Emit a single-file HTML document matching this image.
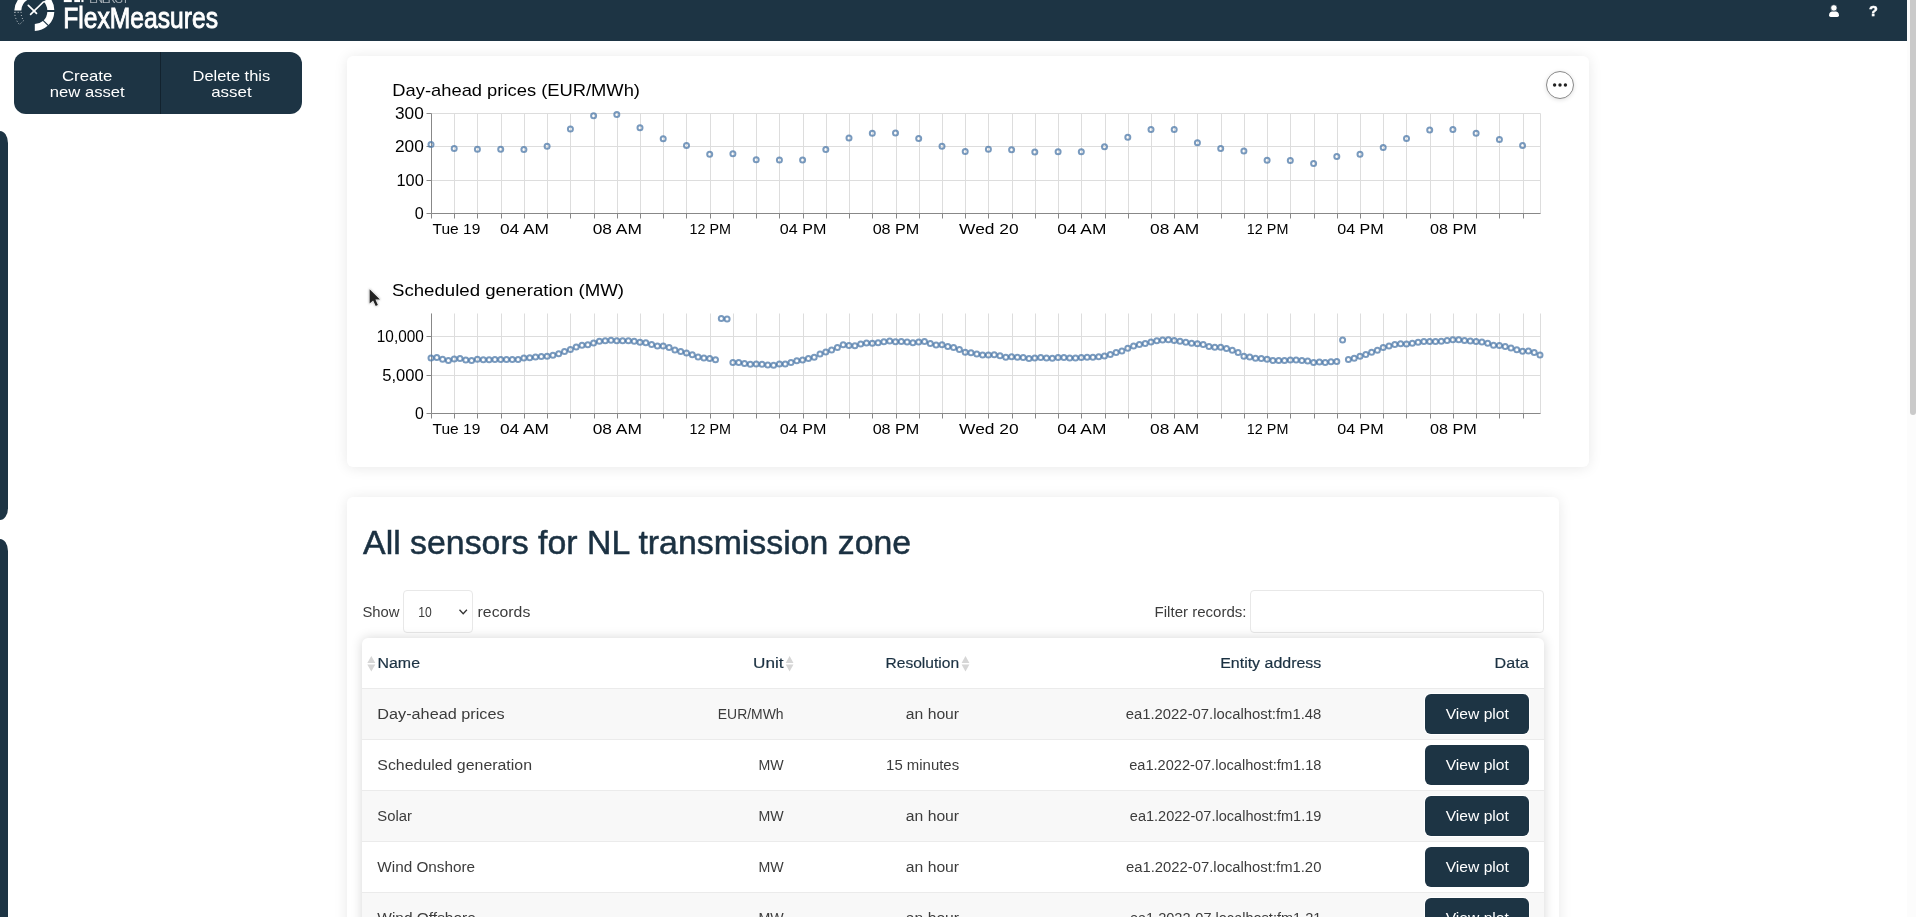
<!DOCTYPE html>
<html><head><meta charset="utf-8">
<style>
*{box-sizing:border-box;margin:0;padding:0}
html,body{width:1916px;height:917px;overflow:hidden;background:#fff;font-family:"Liberation Sans",sans-serif}
.abs{position:absolute}
#hdr{left:0;top:0;width:1907px;height:41px;background:#1d3444}
#sb{left:1907px;top:0;width:9px;height:917px;background:#fcfcfc}
#thumb{left:1910px;top:0;width:6px;height:415px;background:#cacaca;border-radius:0 0 3px 3px}
#btngrp{left:14px;top:52px;width:288px;height:62px;background:#1d3444;border-radius:12px;overflow:hidden}
#btngrp .div{position:absolute;left:146px;top:0;width:1px;height:62px;background:#12222e}
.tab{left:0;width:8px;background:#1d3444;border-radius:0 8px 8px 0 / 0 12px 12px 0}
.card{background:#fff;border-radius:6px;box-shadow:0 1px 14px rgba(0,0,0,0.095)}
.inp{background:#fff;border:1px solid #e8e8e8;border-radius:4px}
#tbl{left:362px;top:637.8px;width:1182px;height:300px;background:#fff;border-radius:6px;box-shadow:0 0 12px rgba(0,0,0,0.16);overflow:hidden}
.vbtn{left:1425px;width:104px;height:40px;background:#1d3444;border-radius:6px;box-shadow:0 0 0 1px #fff}
#menu{left:1546px;top:71px;width:28px;height:28px;border-radius:50%;border:1px solid #8a8a8a;background:#fff;box-shadow:0 1px 4px rgba(0,0,0,0.12)}
svg{position:absolute;left:0;top:0;will-change:transform}
text{font-family:"Liberation Sans",sans-serif}
</style></head>
<body>
<div id="hdr" class="abs"></div>
<div id="sb" class="abs"></div>
<div id="thumb" class="abs"></div>
<div id="btngrp" class="abs"><div class="div"></div></div>
<div class="abs tab" style="top:131px;height:389px"></div>
<div class="abs tab" style="top:539px;height:390px"></div>
<div class="abs card" style="left:347px;top:56px;width:1242px;height:411px"></div>
<div class="abs card" style="left:347px;top:497px;width:1212px;height:440px"></div>
<div id="menu" class="abs"></div>
<div class="abs inp" style="left:403.4px;top:590.4px;width:69.4px;height:42.4px"></div>
<div class="abs inp" style="left:1250.4px;top:590.2px;width:293.6px;height:42.8px"></div>
<div id="tbl" class="abs"></div>
<div class="abs" style="left:362px;top:688px;width:1182px;height:51px;background:#f8f8f8;border-top:1px solid #ebebeb"></div><div class="abs vbtn" style="top:693.9px"></div><div class="abs" style="left:362px;top:739px;width:1182px;height:51px;background:#fff;border-top:1px solid #ebebeb"></div><div class="abs vbtn" style="top:744.9px"></div><div class="abs" style="left:362px;top:790px;width:1182px;height:51px;background:#f8f8f8;border-top:1px solid #ebebeb"></div><div class="abs vbtn" style="top:795.9px"></div><div class="abs" style="left:362px;top:841px;width:1182px;height:51px;background:#fff;border-top:1px solid #ebebeb"></div><div class="abs vbtn" style="top:846.9px"></div><div class="abs" style="left:362px;top:892px;width:1182px;height:51px;background:#f8f8f8;border-top:1px solid #ebebeb"></div><div class="abs vbtn" style="top:897.9px"></div>
<svg width="1916" height="917" viewBox="0 0 1916 917">
<g fill="#222"><circle cx="1554.6" cy="85" r="1.7"/><circle cx="1560" cy="85" r="1.7"/><circle cx="1565.4" cy="85" r="1.7"/></g>
<path d="M459.5 609.8 L463.2 613.8 L466.9 609.8" fill="none" stroke="#333" stroke-width="1.3"/>
<g fill="#d6d6d6">
<path d="M367.3 663 L371.3 656 L375.3 663Z M367.3 664.5 L371.3 671.5 L375.3 664.5Z"/>
<path d="M785.7 663 L789.6 656 L793.5 663Z M785.7 664.5 L789.6 671.5 L793.5 664.5Z"/>
<path d="M961.6 663 L965.5 656 L969.4 663Z M961.6 664.5 L965.5 671.5 L969.4 664.5Z"/>
</g>
<g fill="#fff">
<path d="M1829 15.3 Q1829 11.2 1834 11.2 Q1839 11.2 1839 15.3 Q1839 17.1 1837.3 17.1 L1830.7 17.1 Q1829 17.1 1829 15.3Z"/>
<circle cx="1833.9" cy="7.9" r="3.2" stroke="#1d3243" stroke-width="0.7"/>
</g>
<g fill="#fff"><path d="M14.3 10.4 A20 20 0 0 1 17.8 0 L27.2 0 A13 13 0 0 0 21.3 10.4Z"/><path d="M46 0 L51.5 0 A20 20 0 0 1 54.3 10.1 L47.3 10.1 A13 13 0 0 0 43.5 1.5Z"/><path d="M54.3 11.9 A20 20 0 0 1 48.6 25 L43.7 20.3 A13 13 0 0 0 47.3 11.9Z"/><path d="M47.7 25.8 A20 20 0 0 1 34.8 31 L34.8 24 A13 13 0 0 0 42.9 21Z"/></g><g stroke="#fff" stroke-width="1.7" stroke-linecap="round" fill="none"><path d="M28.3 5.4 L36.5 13.4"/><path d="M30.6 14.4 L43.3 2"/></g><path d="M14.6 12.3 L21.2 12.3 A13 13 0 0 0 23.6 20.6 L19.5 24.6 A20 20 0 0 1 14.6 12.3Z" stroke="#fff" stroke-width="0.9" stroke-dasharray="0.9 2.2" fill="none"/><g fill="#fff"><rect x="63.8" y="0" width="8" height="2.1"/><rect x="74.3" y="0" width="5.7" height="2.1"/><rect x="81.4" y="0" width="2.1" height="2.1"/></g><text x="89.3" y="2.8" font-size="11" fill="#a9b1b8" textLength="39.7" lengthAdjust="spacing">ENERGY</text>
<g stroke="#ddd" stroke-width="1"><line x1="431.5" y1="113.5" x2="431.5" y2="213.5"/><line x1="454.5" y1="113.5" x2="454.5" y2="213.5"/><line x1="477.5" y1="113.5" x2="477.5" y2="213.5"/><line x1="501.5" y1="113.5" x2="501.5" y2="213.5"/><line x1="524.5" y1="113.5" x2="524.5" y2="213.5"/><line x1="547.5" y1="113.5" x2="547.5" y2="213.5"/><line x1="570.5" y1="113.5" x2="570.5" y2="213.5"/><line x1="594.5" y1="113.5" x2="594.5" y2="213.5"/><line x1="617.5" y1="113.5" x2="617.5" y2="213.5"/><line x1="640.5" y1="113.5" x2="640.5" y2="213.5"/><line x1="663.5" y1="113.5" x2="663.5" y2="213.5"/><line x1="686.5" y1="113.5" x2="686.5" y2="213.5"/><line x1="710.5" y1="113.5" x2="710.5" y2="213.5"/><line x1="733.5" y1="113.5" x2="733.5" y2="213.5"/><line x1="756.5" y1="113.5" x2="756.5" y2="213.5"/><line x1="779.5" y1="113.5" x2="779.5" y2="213.5"/><line x1="803.5" y1="113.5" x2="803.5" y2="213.5"/><line x1="826.5" y1="113.5" x2="826.5" y2="213.5"/><line x1="849.5" y1="113.5" x2="849.5" y2="213.5"/><line x1="872.5" y1="113.5" x2="872.5" y2="213.5"/><line x1="896.5" y1="113.5" x2="896.5" y2="213.5"/><line x1="919.5" y1="113.5" x2="919.5" y2="213.5"/><line x1="942.5" y1="113.5" x2="942.5" y2="213.5"/><line x1="965.5" y1="113.5" x2="965.5" y2="213.5"/><line x1="988.5" y1="113.5" x2="988.5" y2="213.5"/><line x1="1012.5" y1="113.5" x2="1012.5" y2="213.5"/><line x1="1035.5" y1="113.5" x2="1035.5" y2="213.5"/><line x1="1058.5" y1="113.5" x2="1058.5" y2="213.5"/><line x1="1081.5" y1="113.5" x2="1081.5" y2="213.5"/><line x1="1105.5" y1="113.5" x2="1105.5" y2="213.5"/><line x1="1128.5" y1="113.5" x2="1128.5" y2="213.5"/><line x1="1151.5" y1="113.5" x2="1151.5" y2="213.5"/><line x1="1174.5" y1="113.5" x2="1174.5" y2="213.5"/><line x1="1197.5" y1="113.5" x2="1197.5" y2="213.5"/><line x1="1221.5" y1="113.5" x2="1221.5" y2="213.5"/><line x1="1244.5" y1="113.5" x2="1244.5" y2="213.5"/><line x1="1267.5" y1="113.5" x2="1267.5" y2="213.5"/><line x1="1290.5" y1="113.5" x2="1290.5" y2="213.5"/><line x1="1314.5" y1="113.5" x2="1314.5" y2="213.5"/><line x1="1337.5" y1="113.5" x2="1337.5" y2="213.5"/><line x1="1360.5" y1="113.5" x2="1360.5" y2="213.5"/><line x1="1383.5" y1="113.5" x2="1383.5" y2="213.5"/><line x1="1406.5" y1="113.5" x2="1406.5" y2="213.5"/><line x1="1430.5" y1="113.5" x2="1430.5" y2="213.5"/><line x1="1453.5" y1="113.5" x2="1453.5" y2="213.5"/><line x1="1476.5" y1="113.5" x2="1476.5" y2="213.5"/><line x1="1499.5" y1="113.5" x2="1499.5" y2="213.5"/><line x1="1523.5" y1="113.5" x2="1523.5" y2="213.5"/><line x1="1540.5" y1="113.5" x2="1540.5" y2="213.5"/><line x1="431.5" y1="113.5" x2="1540.5" y2="113.5"/><line x1="431.5" y1="146.5" x2="1540.5" y2="146.5"/><line x1="431.5" y1="180.5" x2="1540.5" y2="180.5"/><line x1="431.5" y1="213.5" x2="1540.5" y2="213.5"/></g><g stroke="#888" stroke-width="1"><line x1="431.5" y1="213.5" x2="1540.5" y2="213.5"/><line x1="431.5" y1="113.5" x2="431.5" y2="213.5"/><line x1="431.5" y1="213.5" x2="431.5" y2="218.5"/><line x1="454.5" y1="213.5" x2="454.5" y2="218.5"/><line x1="477.5" y1="213.5" x2="477.5" y2="218.5"/><line x1="501.5" y1="213.5" x2="501.5" y2="218.5"/><line x1="524.5" y1="213.5" x2="524.5" y2="218.5"/><line x1="547.5" y1="213.5" x2="547.5" y2="218.5"/><line x1="570.5" y1="213.5" x2="570.5" y2="218.5"/><line x1="594.5" y1="213.5" x2="594.5" y2="218.5"/><line x1="617.5" y1="213.5" x2="617.5" y2="218.5"/><line x1="640.5" y1="213.5" x2="640.5" y2="218.5"/><line x1="663.5" y1="213.5" x2="663.5" y2="218.5"/><line x1="686.5" y1="213.5" x2="686.5" y2="218.5"/><line x1="710.5" y1="213.5" x2="710.5" y2="218.5"/><line x1="733.5" y1="213.5" x2="733.5" y2="218.5"/><line x1="756.5" y1="213.5" x2="756.5" y2="218.5"/><line x1="779.5" y1="213.5" x2="779.5" y2="218.5"/><line x1="803.5" y1="213.5" x2="803.5" y2="218.5"/><line x1="826.5" y1="213.5" x2="826.5" y2="218.5"/><line x1="849.5" y1="213.5" x2="849.5" y2="218.5"/><line x1="872.5" y1="213.5" x2="872.5" y2="218.5"/><line x1="896.5" y1="213.5" x2="896.5" y2="218.5"/><line x1="919.5" y1="213.5" x2="919.5" y2="218.5"/><line x1="942.5" y1="213.5" x2="942.5" y2="218.5"/><line x1="965.5" y1="213.5" x2="965.5" y2="218.5"/><line x1="988.5" y1="213.5" x2="988.5" y2="218.5"/><line x1="1012.5" y1="213.5" x2="1012.5" y2="218.5"/><line x1="1035.5" y1="213.5" x2="1035.5" y2="218.5"/><line x1="1058.5" y1="213.5" x2="1058.5" y2="218.5"/><line x1="1081.5" y1="213.5" x2="1081.5" y2="218.5"/><line x1="1105.5" y1="213.5" x2="1105.5" y2="218.5"/><line x1="1128.5" y1="213.5" x2="1128.5" y2="218.5"/><line x1="1151.5" y1="213.5" x2="1151.5" y2="218.5"/><line x1="1174.5" y1="213.5" x2="1174.5" y2="218.5"/><line x1="1197.5" y1="213.5" x2="1197.5" y2="218.5"/><line x1="1221.5" y1="213.5" x2="1221.5" y2="218.5"/><line x1="1244.5" y1="213.5" x2="1244.5" y2="218.5"/><line x1="1267.5" y1="213.5" x2="1267.5" y2="218.5"/><line x1="1290.5" y1="213.5" x2="1290.5" y2="218.5"/><line x1="1314.5" y1="213.5" x2="1314.5" y2="218.5"/><line x1="1337.5" y1="213.5" x2="1337.5" y2="218.5"/><line x1="1360.5" y1="213.5" x2="1360.5" y2="218.5"/><line x1="1383.5" y1="213.5" x2="1383.5" y2="218.5"/><line x1="1406.5" y1="213.5" x2="1406.5" y2="218.5"/><line x1="1430.5" y1="213.5" x2="1430.5" y2="218.5"/><line x1="1453.5" y1="213.5" x2="1453.5" y2="218.5"/><line x1="1476.5" y1="213.5" x2="1476.5" y2="218.5"/><line x1="1499.5" y1="213.5" x2="1499.5" y2="218.5"/><line x1="1523.5" y1="213.5" x2="1523.5" y2="218.5"/><line x1="426.5" y1="113.5" x2="431.5" y2="113.5"/><line x1="426.5" y1="146.5" x2="431.5" y2="146.5"/><line x1="426.5" y1="180.5" x2="431.5" y2="180.5"/><line x1="426.5" y1="213.5" x2="431.5" y2="213.5"/></g><g fill="none" stroke="#4c78a8" stroke-opacity="0.75" stroke-width="2.0"><circle cx="431.0" cy="144.6" r="2.5"/><circle cx="454.2" cy="148.5" r="2.5"/><circle cx="477.4" cy="149.2" r="2.5"/><circle cx="500.7" cy="149.3" r="2.5"/><circle cx="523.9" cy="149.6" r="2.5"/><circle cx="547.1" cy="146.2" r="2.5"/><circle cx="570.4" cy="129.1" r="2.5"/><circle cx="593.6" cy="115.8" r="2.5"/><circle cx="616.8" cy="114.6" r="2.5"/><circle cx="640.0" cy="127.7" r="2.5"/><circle cx="663.2" cy="138.7" r="2.5"/><circle cx="686.5" cy="145.6" r="2.5"/><circle cx="709.7" cy="154.2" r="2.5"/><circle cx="732.9" cy="153.7" r="2.5"/><circle cx="756.2" cy="159.7" r="2.5"/><circle cx="779.4" cy="160.0" r="2.5"/><circle cx="802.6" cy="160.0" r="2.5"/><circle cx="825.8" cy="149.5" r="2.5"/><circle cx="849.0" cy="137.9" r="2.5"/><circle cx="872.3" cy="133.2" r="2.5"/><circle cx="895.5" cy="132.9" r="2.5"/><circle cx="918.7" cy="138.4" r="2.5"/><circle cx="942.0" cy="146.3" r="2.5"/><circle cx="965.2" cy="151.5" r="2.5"/><circle cx="988.4" cy="149.3" r="2.5"/><circle cx="1011.6" cy="149.8" r="2.5"/><circle cx="1034.8" cy="152.0" r="2.5"/><circle cx="1058.1" cy="151.8" r="2.5"/><circle cx="1081.3" cy="151.8" r="2.5"/><circle cx="1104.5" cy="146.8" r="2.5"/><circle cx="1127.8" cy="137.3" r="2.5"/><circle cx="1151.0" cy="129.6" r="2.5"/><circle cx="1174.2" cy="129.6" r="2.5"/><circle cx="1197.4" cy="142.7" r="2.5"/><circle cx="1220.7" cy="148.5" r="2.5"/><circle cx="1243.9" cy="151.0" r="2.5"/><circle cx="1267.1" cy="160.3" r="2.5"/><circle cx="1290.3" cy="160.6" r="2.5"/><circle cx="1313.6" cy="163.6" r="2.5"/><circle cx="1336.8" cy="156.5" r="2.5"/><circle cx="1360.0" cy="154.3" r="2.5"/><circle cx="1383.2" cy="147.4" r="2.5"/><circle cx="1406.5" cy="138.5" r="2.5"/><circle cx="1429.7" cy="129.9" r="2.5"/><circle cx="1452.9" cy="129.6" r="2.5"/><circle cx="1476.1" cy="133.2" r="2.5"/><circle cx="1499.4" cy="139.6" r="2.5"/><circle cx="1522.6" cy="145.6" r="2.5"/></g><g stroke="#ddd" stroke-width="1"><line x1="431.5" y1="313.5" x2="431.5" y2="413.5"/><line x1="454.5" y1="313.5" x2="454.5" y2="413.5"/><line x1="477.5" y1="313.5" x2="477.5" y2="413.5"/><line x1="501.5" y1="313.5" x2="501.5" y2="413.5"/><line x1="524.5" y1="313.5" x2="524.5" y2="413.5"/><line x1="547.5" y1="313.5" x2="547.5" y2="413.5"/><line x1="570.5" y1="313.5" x2="570.5" y2="413.5"/><line x1="594.5" y1="313.5" x2="594.5" y2="413.5"/><line x1="617.5" y1="313.5" x2="617.5" y2="413.5"/><line x1="640.5" y1="313.5" x2="640.5" y2="413.5"/><line x1="663.5" y1="313.5" x2="663.5" y2="413.5"/><line x1="686.5" y1="313.5" x2="686.5" y2="413.5"/><line x1="710.5" y1="313.5" x2="710.5" y2="413.5"/><line x1="733.5" y1="313.5" x2="733.5" y2="413.5"/><line x1="756.5" y1="313.5" x2="756.5" y2="413.5"/><line x1="779.5" y1="313.5" x2="779.5" y2="413.5"/><line x1="803.5" y1="313.5" x2="803.5" y2="413.5"/><line x1="826.5" y1="313.5" x2="826.5" y2="413.5"/><line x1="849.5" y1="313.5" x2="849.5" y2="413.5"/><line x1="872.5" y1="313.5" x2="872.5" y2="413.5"/><line x1="896.5" y1="313.5" x2="896.5" y2="413.5"/><line x1="919.5" y1="313.5" x2="919.5" y2="413.5"/><line x1="942.5" y1="313.5" x2="942.5" y2="413.5"/><line x1="965.5" y1="313.5" x2="965.5" y2="413.5"/><line x1="988.5" y1="313.5" x2="988.5" y2="413.5"/><line x1="1012.5" y1="313.5" x2="1012.5" y2="413.5"/><line x1="1035.5" y1="313.5" x2="1035.5" y2="413.5"/><line x1="1058.5" y1="313.5" x2="1058.5" y2="413.5"/><line x1="1081.5" y1="313.5" x2="1081.5" y2="413.5"/><line x1="1105.5" y1="313.5" x2="1105.5" y2="413.5"/><line x1="1128.5" y1="313.5" x2="1128.5" y2="413.5"/><line x1="1151.5" y1="313.5" x2="1151.5" y2="413.5"/><line x1="1174.5" y1="313.5" x2="1174.5" y2="413.5"/><line x1="1197.5" y1="313.5" x2="1197.5" y2="413.5"/><line x1="1221.5" y1="313.5" x2="1221.5" y2="413.5"/><line x1="1244.5" y1="313.5" x2="1244.5" y2="413.5"/><line x1="1267.5" y1="313.5" x2="1267.5" y2="413.5"/><line x1="1290.5" y1="313.5" x2="1290.5" y2="413.5"/><line x1="1314.5" y1="313.5" x2="1314.5" y2="413.5"/><line x1="1337.5" y1="313.5" x2="1337.5" y2="413.5"/><line x1="1360.5" y1="313.5" x2="1360.5" y2="413.5"/><line x1="1383.5" y1="313.5" x2="1383.5" y2="413.5"/><line x1="1406.5" y1="313.5" x2="1406.5" y2="413.5"/><line x1="1430.5" y1="313.5" x2="1430.5" y2="413.5"/><line x1="1453.5" y1="313.5" x2="1453.5" y2="413.5"/><line x1="1476.5" y1="313.5" x2="1476.5" y2="413.5"/><line x1="1499.5" y1="313.5" x2="1499.5" y2="413.5"/><line x1="1523.5" y1="313.5" x2="1523.5" y2="413.5"/><line x1="1540.5" y1="313.5" x2="1540.5" y2="413.5"/><line x1="431.5" y1="336.5" x2="1540.5" y2="336.5"/><line x1="431.5" y1="375.5" x2="1540.5" y2="375.5"/><line x1="431.5" y1="413.5" x2="1540.5" y2="413.5"/></g><g stroke="#888" stroke-width="1"><line x1="431.5" y1="413.5" x2="1540.5" y2="413.5"/><line x1="431.5" y1="313.5" x2="431.5" y2="413.5"/><line x1="431.5" y1="413.5" x2="431.5" y2="418.5"/><line x1="454.5" y1="413.5" x2="454.5" y2="418.5"/><line x1="477.5" y1="413.5" x2="477.5" y2="418.5"/><line x1="501.5" y1="413.5" x2="501.5" y2="418.5"/><line x1="524.5" y1="413.5" x2="524.5" y2="418.5"/><line x1="547.5" y1="413.5" x2="547.5" y2="418.5"/><line x1="570.5" y1="413.5" x2="570.5" y2="418.5"/><line x1="594.5" y1="413.5" x2="594.5" y2="418.5"/><line x1="617.5" y1="413.5" x2="617.5" y2="418.5"/><line x1="640.5" y1="413.5" x2="640.5" y2="418.5"/><line x1="663.5" y1="413.5" x2="663.5" y2="418.5"/><line x1="686.5" y1="413.5" x2="686.5" y2="418.5"/><line x1="710.5" y1="413.5" x2="710.5" y2="418.5"/><line x1="733.5" y1="413.5" x2="733.5" y2="418.5"/><line x1="756.5" y1="413.5" x2="756.5" y2="418.5"/><line x1="779.5" y1="413.5" x2="779.5" y2="418.5"/><line x1="803.5" y1="413.5" x2="803.5" y2="418.5"/><line x1="826.5" y1="413.5" x2="826.5" y2="418.5"/><line x1="849.5" y1="413.5" x2="849.5" y2="418.5"/><line x1="872.5" y1="413.5" x2="872.5" y2="418.5"/><line x1="896.5" y1="413.5" x2="896.5" y2="418.5"/><line x1="919.5" y1="413.5" x2="919.5" y2="418.5"/><line x1="942.5" y1="413.5" x2="942.5" y2="418.5"/><line x1="965.5" y1="413.5" x2="965.5" y2="418.5"/><line x1="988.5" y1="413.5" x2="988.5" y2="418.5"/><line x1="1012.5" y1="413.5" x2="1012.5" y2="418.5"/><line x1="1035.5" y1="413.5" x2="1035.5" y2="418.5"/><line x1="1058.5" y1="413.5" x2="1058.5" y2="418.5"/><line x1="1081.5" y1="413.5" x2="1081.5" y2="418.5"/><line x1="1105.5" y1="413.5" x2="1105.5" y2="418.5"/><line x1="1128.5" y1="413.5" x2="1128.5" y2="418.5"/><line x1="1151.5" y1="413.5" x2="1151.5" y2="418.5"/><line x1="1174.5" y1="413.5" x2="1174.5" y2="418.5"/><line x1="1197.5" y1="413.5" x2="1197.5" y2="418.5"/><line x1="1221.5" y1="413.5" x2="1221.5" y2="418.5"/><line x1="1244.5" y1="413.5" x2="1244.5" y2="418.5"/><line x1="1267.5" y1="413.5" x2="1267.5" y2="418.5"/><line x1="1290.5" y1="413.5" x2="1290.5" y2="418.5"/><line x1="1314.5" y1="413.5" x2="1314.5" y2="418.5"/><line x1="1337.5" y1="413.5" x2="1337.5" y2="418.5"/><line x1="1360.5" y1="413.5" x2="1360.5" y2="418.5"/><line x1="1383.5" y1="413.5" x2="1383.5" y2="418.5"/><line x1="1406.5" y1="413.5" x2="1406.5" y2="418.5"/><line x1="1430.5" y1="413.5" x2="1430.5" y2="418.5"/><line x1="1453.5" y1="413.5" x2="1453.5" y2="418.5"/><line x1="1476.5" y1="413.5" x2="1476.5" y2="418.5"/><line x1="1499.5" y1="413.5" x2="1499.5" y2="418.5"/><line x1="1523.5" y1="413.5" x2="1523.5" y2="418.5"/><line x1="426.5" y1="336.5" x2="431.5" y2="336.5"/><line x1="426.5" y1="375.5" x2="431.5" y2="375.5"/><line x1="426.5" y1="413.5" x2="431.5" y2="413.5"/></g><g fill="none" stroke="#4c78a8" stroke-opacity="0.75" stroke-width="2.0"><circle cx="431.0" cy="358.0" r="2.5"/><circle cx="436.8" cy="357.6" r="2.5"/><circle cx="442.6" cy="359.2" r="2.5"/><circle cx="448.4" cy="360.4" r="2.5"/><circle cx="454.2" cy="358.9" r="2.5"/><circle cx="460.0" cy="358.6" r="2.5"/><circle cx="465.8" cy="359.9" r="2.5"/><circle cx="471.6" cy="360.5" r="2.5"/><circle cx="477.4" cy="359.2" r="2.5"/><circle cx="483.3" cy="359.7" r="2.5"/><circle cx="489.1" cy="359.7" r="2.5"/><circle cx="494.9" cy="359.5" r="2.5"/><circle cx="500.7" cy="359.5" r="2.5"/><circle cx="506.5" cy="359.5" r="2.5"/><circle cx="512.3" cy="359.4" r="2.5"/><circle cx="518.1" cy="359.6" r="2.5"/><circle cx="523.9" cy="358.1" r="2.5"/><circle cx="529.7" cy="357.7" r="2.5"/><circle cx="535.5" cy="357.1" r="2.5"/><circle cx="541.3" cy="356.6" r="2.5"/><circle cx="547.1" cy="356.3" r="2.5"/><circle cx="552.9" cy="355.3" r="2.5"/><circle cx="558.7" cy="353.8" r="2.5"/><circle cx="564.5" cy="351.6" r="2.5"/><circle cx="570.4" cy="349.5" r="2.5"/><circle cx="576.2" cy="347.1" r="2.5"/><circle cx="582.0" cy="345.3" r="2.5"/><circle cx="587.8" cy="344.7" r="2.5"/><circle cx="593.6" cy="342.9" r="2.5"/><circle cx="599.4" cy="341.3" r="2.5"/><circle cx="605.2" cy="340.7" r="2.5"/><circle cx="611.0" cy="340.3" r="2.5"/><circle cx="616.8" cy="340.7" r="2.5"/><circle cx="622.6" cy="340.7" r="2.5"/><circle cx="628.4" cy="340.7" r="2.5"/><circle cx="634.2" cy="341.3" r="2.5"/><circle cx="640.0" cy="342.2" r="2.5"/><circle cx="645.8" cy="342.8" r="2.5"/><circle cx="651.6" cy="344.4" r="2.5"/><circle cx="657.4" cy="346.1" r="2.5"/><circle cx="663.2" cy="346.1" r="2.5"/><circle cx="669.1" cy="347.6" r="2.5"/><circle cx="674.9" cy="350.1" r="2.5"/><circle cx="680.7" cy="351.6" r="2.5"/><circle cx="686.5" cy="353.1" r="2.5"/><circle cx="692.3" cy="354.7" r="2.5"/><circle cx="698.1" cy="357.0" r="2.5"/><circle cx="703.9" cy="357.9" r="2.5"/><circle cx="709.7" cy="358.6" r="2.5"/><circle cx="715.5" cy="359.7" r="2.5"/><circle cx="721.3" cy="318.5" r="2.5"/><circle cx="727.1" cy="319.1" r="2.5"/><circle cx="732.9" cy="362.6" r="2.5"/><circle cx="738.7" cy="362.4" r="2.5"/><circle cx="744.5" cy="363.5" r="2.5"/><circle cx="750.3" cy="364.2" r="2.5"/><circle cx="756.2" cy="363.9" r="2.5"/><circle cx="762.0" cy="364.2" r="2.5"/><circle cx="767.8" cy="365.1" r="2.5"/><circle cx="773.6" cy="365.2" r="2.5"/><circle cx="779.4" cy="364.1" r="2.5"/><circle cx="785.2" cy="363.9" r="2.5"/><circle cx="791.0" cy="362.4" r="2.5"/><circle cx="796.8" cy="360.7" r="2.5"/><circle cx="802.6" cy="360.1" r="2.5"/><circle cx="808.4" cy="358.5" r="2.5"/><circle cx="814.2" cy="357.2" r="2.5"/><circle cx="820.0" cy="354.1" r="2.5"/><circle cx="825.8" cy="352.0" r="2.5"/><circle cx="831.6" cy="350.1" r="2.5"/><circle cx="837.4" cy="347.6" r="2.5"/><circle cx="843.2" cy="344.8" r="2.5"/><circle cx="849.0" cy="345.5" r="2.5"/><circle cx="854.9" cy="345.7" r="2.5"/><circle cx="860.7" cy="344.1" r="2.5"/><circle cx="866.5" cy="342.9" r="2.5"/><circle cx="872.3" cy="343.2" r="2.5"/><circle cx="878.1" cy="342.8" r="2.5"/><circle cx="883.9" cy="341.7" r="2.5"/><circle cx="889.7" cy="340.9" r="2.5"/><circle cx="895.5" cy="341.7" r="2.5"/><circle cx="901.3" cy="341.6" r="2.5"/><circle cx="907.1" cy="341.9" r="2.5"/><circle cx="912.9" cy="342.8" r="2.5"/><circle cx="918.7" cy="341.9" r="2.5"/><circle cx="924.5" cy="341.6" r="2.5"/><circle cx="930.3" cy="343.6" r="2.5"/><circle cx="936.1" cy="345.1" r="2.5"/><circle cx="942.0" cy="344.7" r="2.5"/><circle cx="947.8" cy="346.6" r="2.5"/><circle cx="953.6" cy="347.6" r="2.5"/><circle cx="959.4" cy="349.5" r="2.5"/><circle cx="965.2" cy="352.3" r="2.5"/><circle cx="971.0" cy="352.8" r="2.5"/><circle cx="976.8" cy="354.1" r="2.5"/><circle cx="982.6" cy="355.1" r="2.5"/><circle cx="988.4" cy="355.1" r="2.5"/><circle cx="994.2" cy="354.7" r="2.5"/><circle cx="1000.0" cy="355.7" r="2.5"/><circle cx="1005.8" cy="357.2" r="2.5"/><circle cx="1011.6" cy="356.7" r="2.5"/><circle cx="1017.4" cy="357.2" r="2.5"/><circle cx="1023.2" cy="357.4" r="2.5"/><circle cx="1029.0" cy="358.5" r="2.5"/><circle cx="1034.8" cy="357.9" r="2.5"/><circle cx="1040.7" cy="357.6" r="2.5"/><circle cx="1046.5" cy="357.9" r="2.5"/><circle cx="1052.3" cy="358.2" r="2.5"/><circle cx="1058.1" cy="357.6" r="2.5"/><circle cx="1063.9" cy="357.6" r="2.5"/><circle cx="1069.7" cy="357.9" r="2.5"/><circle cx="1075.5" cy="357.9" r="2.5"/><circle cx="1081.3" cy="357.6" r="2.5"/><circle cx="1087.1" cy="357.2" r="2.5"/><circle cx="1092.9" cy="357.2" r="2.5"/><circle cx="1098.7" cy="356.7" r="2.5"/><circle cx="1104.5" cy="356.0" r="2.5"/><circle cx="1110.3" cy="354.5" r="2.5"/><circle cx="1116.1" cy="352.6" r="2.5"/><circle cx="1121.9" cy="351.0" r="2.5"/><circle cx="1127.8" cy="348.2" r="2.5"/><circle cx="1133.6" cy="346.0" r="2.5"/><circle cx="1139.4" cy="344.4" r="2.5"/><circle cx="1145.2" cy="343.4" r="2.5"/><circle cx="1151.0" cy="341.9" r="2.5"/><circle cx="1156.8" cy="340.7" r="2.5"/><circle cx="1162.6" cy="340.1" r="2.5"/><circle cx="1168.4" cy="339.7" r="2.5"/><circle cx="1174.2" cy="340.4" r="2.5"/><circle cx="1180.0" cy="341.3" r="2.5"/><circle cx="1185.8" cy="342.2" r="2.5"/><circle cx="1191.6" cy="343.2" r="2.5"/><circle cx="1197.4" cy="343.8" r="2.5"/><circle cx="1203.2" cy="344.4" r="2.5"/><circle cx="1209.0" cy="346.6" r="2.5"/><circle cx="1214.8" cy="347.3" r="2.5"/><circle cx="1220.7" cy="347.2" r="2.5"/><circle cx="1226.5" cy="348.6" r="2.5"/><circle cx="1232.3" cy="350.3" r="2.5"/><circle cx="1238.1" cy="352.6" r="2.5"/><circle cx="1243.9" cy="356.3" r="2.5"/><circle cx="1249.7" cy="357.0" r="2.5"/><circle cx="1255.5" cy="358.2" r="2.5"/><circle cx="1261.3" cy="358.5" r="2.5"/><circle cx="1267.1" cy="359.2" r="2.5"/><circle cx="1272.9" cy="360.5" r="2.5"/><circle cx="1278.7" cy="360.5" r="2.5"/><circle cx="1284.5" cy="360.5" r="2.5"/><circle cx="1290.3" cy="360.1" r="2.5"/><circle cx="1296.1" cy="360.1" r="2.5"/><circle cx="1301.9" cy="360.5" r="2.5"/><circle cx="1307.7" cy="361.1" r="2.5"/><circle cx="1313.6" cy="362.4" r="2.5"/><circle cx="1319.4" cy="362.0" r="2.5"/><circle cx="1325.2" cy="362.4" r="2.5"/><circle cx="1331.0" cy="361.7" r="2.5"/><circle cx="1336.8" cy="361.6" r="2.5"/><circle cx="1342.6" cy="340.1" r="2.5"/><circle cx="1348.4" cy="359.5" r="2.5"/><circle cx="1354.2" cy="358.2" r="2.5"/><circle cx="1360.0" cy="356.3" r="2.5"/><circle cx="1365.8" cy="354.5" r="2.5"/><circle cx="1371.6" cy="352.3" r="2.5"/><circle cx="1377.4" cy="350.3" r="2.5"/><circle cx="1383.2" cy="347.6" r="2.5"/><circle cx="1389.0" cy="346.0" r="2.5"/><circle cx="1394.8" cy="344.4" r="2.5"/><circle cx="1400.6" cy="343.8" r="2.5"/><circle cx="1406.5" cy="344.1" r="2.5"/><circle cx="1412.3" cy="343.2" r="2.5"/><circle cx="1418.1" cy="342.3" r="2.5"/><circle cx="1423.9" cy="341.6" r="2.5"/><circle cx="1429.7" cy="341.6" r="2.5"/><circle cx="1435.5" cy="341.6" r="2.5"/><circle cx="1441.3" cy="341.3" r="2.5"/><circle cx="1447.1" cy="340.4" r="2.5"/><circle cx="1452.9" cy="339.8" r="2.5"/><circle cx="1458.7" cy="339.7" r="2.5"/><circle cx="1464.5" cy="340.4" r="2.5"/><circle cx="1470.3" cy="340.9" r="2.5"/><circle cx="1476.1" cy="341.6" r="2.5"/><circle cx="1481.9" cy="341.9" r="2.5"/><circle cx="1487.7" cy="343.2" r="2.5"/><circle cx="1493.5" cy="345.3" r="2.5"/><circle cx="1499.4" cy="345.5" r="2.5"/><circle cx="1505.2" cy="346.6" r="2.5"/><circle cx="1511.0" cy="348.0" r="2.5"/><circle cx="1516.8" cy="349.7" r="2.5"/><circle cx="1522.6" cy="351.3" r="2.5"/><circle cx="1528.4" cy="351.0" r="2.5"/><circle cx="1534.2" cy="352.6" r="2.5"/><circle cx="1540.0" cy="355.1" r="2.5"/></g>
<text x="63.2" y="27.5" font-size="29.6" text-anchor="start" fill="#fff" textLength="154.8" lengthAdjust="spacingAndGlyphs" stroke="#fff" stroke-width="0.9">FlexMeasures</text><text x="1873.4" y="16.1" font-size="14.5" text-anchor="middle" font-weight="700" fill="#fff" stroke="#fff" stroke-width="0.5">?</text><text x="87.2" y="80.8" font-size="14.3" text-anchor="middle" fill="#fff" textLength="50.4" lengthAdjust="spacingAndGlyphs">Create</text><text x="87.2" y="96.8" font-size="14.3" text-anchor="middle" fill="#fff" textLength="74.8" lengthAdjust="spacingAndGlyphs">new asset</text><text x="231.4" y="80.8" font-size="14.3" text-anchor="middle" fill="#fff" textLength="77.6" lengthAdjust="spacingAndGlyphs">Delete this</text><text x="231.4" y="96.8" font-size="14.3" text-anchor="middle" fill="#fff" textLength="40.4" lengthAdjust="spacingAndGlyphs">asset</text><text x="392.3" y="96" font-size="16.4" text-anchor="start" textLength="247.7" lengthAdjust="spacingAndGlyphs">Day-ahead prices (EUR/MWh)</text><text x="392" y="296.4" font-size="16.4" text-anchor="start" textLength="232" lengthAdjust="spacingAndGlyphs">Scheduled generation (MW)</text><text x="395.0" y="119.0" font-size="16.4" text-anchor="start" textLength="28.8" lengthAdjust="spacingAndGlyphs">300</text><text x="395.0" y="152.0" font-size="16.4" text-anchor="start" textLength="28.8" lengthAdjust="spacingAndGlyphs">200</text><text x="396.5" y="186.0" font-size="16.4" text-anchor="start" textLength="27.3" lengthAdjust="spacingAndGlyphs">100</text><text x="414.8" y="219.0" font-size="16.4" text-anchor="start" textLength="9" lengthAdjust="spacingAndGlyphs">0</text><text x="376.8" y="342.0" font-size="16.4" text-anchor="start" textLength="47" lengthAdjust="spacingAndGlyphs">10,000</text><text x="382.2" y="381.0" font-size="16.4" text-anchor="start" textLength="41.6" lengthAdjust="spacingAndGlyphs">5,000</text><text x="415.0" y="419.0" font-size="16.4" text-anchor="start" textLength="8.8" lengthAdjust="spacingAndGlyphs">0</text><text x="432.5" y="233.7" font-size="14.9" text-anchor="start" textLength="47.8" lengthAdjust="spacingAndGlyphs">Tue 19</text><text x="499.9" y="233.7" font-size="14.9" text-anchor="start" textLength="49" lengthAdjust="spacingAndGlyphs">04 AM</text><text x="592.6999999999999" y="233.7" font-size="14.9" text-anchor="start" textLength="49.2" lengthAdjust="spacingAndGlyphs">08 AM</text><text x="689.45" y="233.7" font-size="14.9" text-anchor="start" textLength="41.5" lengthAdjust="spacingAndGlyphs">12 PM</text><text x="779.85" y="233.7" font-size="14.9" text-anchor="start" textLength="46.5" lengthAdjust="spacingAndGlyphs">04 PM</text><text x="872.65" y="233.7" font-size="14.9" text-anchor="start" textLength="46.7" lengthAdjust="spacingAndGlyphs">08 PM</text><text x="959.1000000000001" y="233.7" font-size="14.9" text-anchor="start" textLength="59.6" lengthAdjust="spacingAndGlyphs">Wed 20</text><text x="1057.3000000000002" y="233.7" font-size="14.9" text-anchor="start" textLength="49" lengthAdjust="spacingAndGlyphs">04 AM</text><text x="1150.1000000000001" y="233.7" font-size="14.9" text-anchor="start" textLength="49.2" lengthAdjust="spacingAndGlyphs">08 AM</text><text x="1246.85" y="233.7" font-size="14.9" text-anchor="start" textLength="41.5" lengthAdjust="spacingAndGlyphs">12 PM</text><text x="1337.25" y="233.7" font-size="14.9" text-anchor="start" textLength="46.5" lengthAdjust="spacingAndGlyphs">04 PM</text><text x="1430.0500000000002" y="233.7" font-size="14.9" text-anchor="start" textLength="46.7" lengthAdjust="spacingAndGlyphs">08 PM</text><text x="432.5" y="433.6" font-size="14.9" text-anchor="start" textLength="47.8" lengthAdjust="spacingAndGlyphs">Tue 19</text><text x="499.9" y="433.6" font-size="14.9" text-anchor="start" textLength="49" lengthAdjust="spacingAndGlyphs">04 AM</text><text x="592.6999999999999" y="433.6" font-size="14.9" text-anchor="start" textLength="49.2" lengthAdjust="spacingAndGlyphs">08 AM</text><text x="689.45" y="433.6" font-size="14.9" text-anchor="start" textLength="41.5" lengthAdjust="spacingAndGlyphs">12 PM</text><text x="779.85" y="433.6" font-size="14.9" text-anchor="start" textLength="46.5" lengthAdjust="spacingAndGlyphs">04 PM</text><text x="872.65" y="433.6" font-size="14.9" text-anchor="start" textLength="46.7" lengthAdjust="spacingAndGlyphs">08 PM</text><text x="959.1000000000001" y="433.6" font-size="14.9" text-anchor="start" textLength="59.6" lengthAdjust="spacingAndGlyphs">Wed 20</text><text x="1057.3000000000002" y="433.6" font-size="14.9" text-anchor="start" textLength="49" lengthAdjust="spacingAndGlyphs">04 AM</text><text x="1150.1000000000001" y="433.6" font-size="14.9" text-anchor="start" textLength="49.2" lengthAdjust="spacingAndGlyphs">08 AM</text><text x="1246.85" y="433.6" font-size="14.9" text-anchor="start" textLength="41.5" lengthAdjust="spacingAndGlyphs">12 PM</text><text x="1337.25" y="433.6" font-size="14.9" text-anchor="start" textLength="46.5" lengthAdjust="spacingAndGlyphs">04 PM</text><text x="1430.0500000000002" y="433.6" font-size="14.9" text-anchor="start" textLength="46.7" lengthAdjust="spacingAndGlyphs">08 PM</text><text x="363.1" y="553.8" font-size="33" text-anchor="start" fill="#1b3142" textLength="548.1" lengthAdjust="spacingAndGlyphs" stroke="#1b3142" stroke-width="0.5">All sensors for NL transmission zone</text><text x="362.4" y="617.2" font-size="15.3" text-anchor="start" fill="#3c3c3c" textLength="37.1" lengthAdjust="spacingAndGlyphs">Show</text><text x="418.2" y="617.2" font-size="15.3" text-anchor="start" fill="#3c3c3c" textLength="13.5" lengthAdjust="spacingAndGlyphs">10</text><text x="477.6" y="617.2" font-size="15.3" text-anchor="start" fill="#3c3c3c" textLength="52.7" lengthAdjust="spacingAndGlyphs">records</text><text x="1154.6" y="617.2" font-size="15.3" text-anchor="start" fill="#3c3c3c" textLength="91.9" lengthAdjust="spacingAndGlyphs">Filter records:</text><text x="377.5" y="668.2" font-size="15.3" text-anchor="start" fill="#1b3142" textLength="42.5" lengthAdjust="spacingAndGlyphs" stroke="#1b3142" stroke-width="0.2">Name</text><text x="753.1" y="668.2" font-size="15.3" text-anchor="start" fill="#1b3142" textLength="30.5" lengthAdjust="spacingAndGlyphs" stroke="#1b3142" stroke-width="0.2">Unit</text><text x="885.5" y="668.2" font-size="15.3" text-anchor="start" fill="#1b3142" textLength="73.6" lengthAdjust="spacingAndGlyphs" stroke="#1b3142" stroke-width="0.2">Resolution</text><text x="1220.2" y="668.2" font-size="15.3" text-anchor="start" fill="#1b3142" textLength="101.1" lengthAdjust="spacingAndGlyphs" stroke="#1b3142" stroke-width="0.2">Entity address</text><text x="1494.6" y="668.2" font-size="15.3" text-anchor="start" fill="#1b3142" textLength="34" lengthAdjust="spacingAndGlyphs" stroke="#1b3142" stroke-width="0.2">Data</text><text x="377.3" y="718.7" font-size="15.3" text-anchor="start" fill="#3c3c3c" textLength="127.3" lengthAdjust="spacingAndGlyphs">Day-ahead prices</text><text x="717.8000000000001" y="718.7" font-size="15.3" text-anchor="start" fill="#3c3c3c" textLength="65.8" lengthAdjust="spacingAndGlyphs">EUR/MWh</text><text x="905.8000000000001" y="718.7" font-size="15.3" text-anchor="start" fill="#3c3c3c" textLength="53.3" lengthAdjust="spacingAndGlyphs">an hour</text><text x="1125.7" y="718.7" font-size="15.3" text-anchor="start" fill="#3c3c3c" textLength="195.7" lengthAdjust="spacingAndGlyphs">ea1.2022-07.localhost:fm1.48</text><text x="1445.7" y="718.7" font-size="15.3" text-anchor="start" fill="#fff" textLength="63.2" lengthAdjust="spacingAndGlyphs">View plot</text><text x="377.3" y="769.7" font-size="15.3" text-anchor="start" fill="#3c3c3c" textLength="154.7" lengthAdjust="spacingAndGlyphs">Scheduled generation</text><text x="758.4" y="769.7" font-size="15.3" text-anchor="start" fill="#3c3c3c" textLength="25.2" lengthAdjust="spacingAndGlyphs">MW</text><text x="886.1" y="769.7" font-size="15.3" text-anchor="start" fill="#3c3c3c" textLength="73" lengthAdjust="spacingAndGlyphs">15 minutes</text><text x="1129.2" y="769.7" font-size="15.3" text-anchor="start" fill="#3c3c3c" textLength="192.2" lengthAdjust="spacingAndGlyphs">ea1.2022-07.localhost:fm1.18</text><text x="1445.7" y="769.7" font-size="15.3" text-anchor="start" fill="#fff" textLength="63.2" lengthAdjust="spacingAndGlyphs">View plot</text><text x="377.3" y="820.7" font-size="15.3" text-anchor="start" fill="#3c3c3c" textLength="34.6" lengthAdjust="spacingAndGlyphs">Solar</text><text x="758.4" y="820.7" font-size="15.3" text-anchor="start" fill="#3c3c3c" textLength="25.2" lengthAdjust="spacingAndGlyphs">MW</text><text x="905.8000000000001" y="820.7" font-size="15.3" text-anchor="start" fill="#3c3c3c" textLength="53.3" lengthAdjust="spacingAndGlyphs">an hour</text><text x="1129.8000000000002" y="820.7" font-size="15.3" text-anchor="start" fill="#3c3c3c" textLength="191.6" lengthAdjust="spacingAndGlyphs">ea1.2022-07.localhost:fm1.19</text><text x="1445.7" y="820.7" font-size="15.3" text-anchor="start" fill="#fff" textLength="63.2" lengthAdjust="spacingAndGlyphs">View plot</text><text x="377.3" y="871.7" font-size="15.3" text-anchor="start" fill="#3c3c3c" textLength="97.8" lengthAdjust="spacingAndGlyphs">Wind Onshore</text><text x="758.4" y="871.7" font-size="15.3" text-anchor="start" fill="#3c3c3c" textLength="25.2" lengthAdjust="spacingAndGlyphs">MW</text><text x="905.8000000000001" y="871.7" font-size="15.3" text-anchor="start" fill="#3c3c3c" textLength="53.3" lengthAdjust="spacingAndGlyphs">an hour</text><text x="1125.9" y="871.7" font-size="15.3" text-anchor="start" fill="#3c3c3c" textLength="195.5" lengthAdjust="spacingAndGlyphs">ea1.2022-07.localhost:fm1.20</text><text x="1445.7" y="871.7" font-size="15.3" text-anchor="start" fill="#fff" textLength="63.2" lengthAdjust="spacingAndGlyphs">View plot</text><text x="377.3" y="922.7" font-size="15.3" text-anchor="start" fill="#3c3c3c" textLength="98.5" lengthAdjust="spacingAndGlyphs">Wind Offshore</text><text x="758.4" y="922.7" font-size="15.3" text-anchor="start" fill="#3c3c3c" textLength="25.2" lengthAdjust="spacingAndGlyphs">MW</text><text x="905.8000000000001" y="922.7" font-size="15.3" text-anchor="start" fill="#3c3c3c" textLength="53.3" lengthAdjust="spacingAndGlyphs">an hour</text><text x="1129.9" y="922.7" font-size="15.3" text-anchor="start" fill="#3c3c3c" textLength="191.5" lengthAdjust="spacingAndGlyphs">ea1.2022-07.localhost:fm1.21</text><text x="1445.7" y="922.7" font-size="15.3" text-anchor="start" fill="#fff" textLength="63.2" lengthAdjust="spacingAndGlyphs">View plot</text>
<path d="M369.6 289.2 L369.6 303.6 L373.1 300.4 L375.7 306 L377.9 305 L375.4 299.6 L380 299.4Z" fill="#222" stroke="#fff" stroke-width="1" paint-order="stroke" stroke-linejoin="round" style="filter:drop-shadow(0 0.5px 0.8px rgba(0,0,0,0.3))"/>
</svg>
</body></html>
